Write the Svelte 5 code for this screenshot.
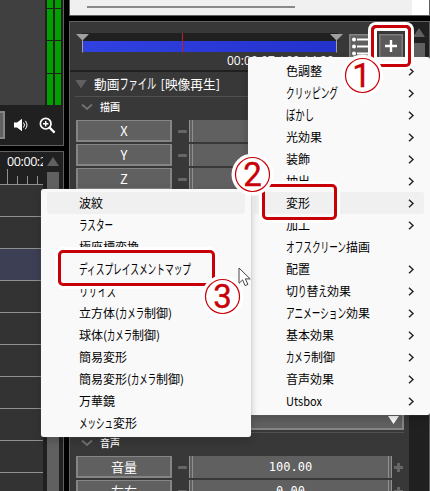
<script lang="ts">
  type Item = { name: string; width: number; leaf?: boolean };
  type Run = { text: string; x: number; width: number; size: number };

  const effects: Item[] = [
    { name: '色調整', width: 36 },
    { name: 'クリッピング', width: 52 },
    { name: 'ぼかし', width: 28 },
    { name: '光効果', width: 36 },
    { name: '装飾', width: 24 },
    { name: '抽出', width: 24 },
    { name: '変形', width: 24 },
    { name: '加工', width: 24 },
    { name: 'オフスクリーン描画', width: 84, leaf: true },
    { name: '配置', width: 24 },
    { name: '切り替え効果', width: 65 },
    { name: 'アニメーション効果', width: 84 },
    { name: '基本効果', width: 48 },
    { name: 'カメラ制御', width: 49 },
    { name: '音声効果', width: 48 },
    { name: 'Utsbox', width: 36 },
  ];

  const transforms: Item[] = [
    { name: '波紋', width: 24 },
    { name: 'ラスター', width: 34 },
    { name: '極座標変換', width: 60 },
    { name: 'ディスプレイスメントマップ', width: 112 },
    { name: 'リサイズ', width: 37 },
    { name: '立方体(カメラ制御)', width: 93 },
    { name: '球体(カメラ制御)', width: 81 },
    { name: '簡易変形', width: 48 },
    { name: '簡易変形(カメラ制御)', width: 105 },
    { name: '万華鏡', width: 36 },
    { name: 'メッシュ変形', width: 58 },
  ];

  const axes = ['X', 'Y', 'Z'];
  const sound = [
    { name: '音量', value: '100.00' },
    { name: '左右', value: '0.00' },
  ];

  // kanji keep their full width, kana share what is left of the line
  function runs(text: string, width: number, size: number): Run[] {
    const parts = text.match(/[\u3040-\u30ff]+|[\u4e00-\u9fff]+|[\x21-\x7e]+| +/g) ?? [];
    const isKanji = (s: string) => /[\u4e00-\u9fff]/.test(s);
    const isKana = (s: string) => /[\u3040-\u30ff]/.test(s);
    const kana = parts.filter(isKana).join('').length;
    const kanji = parts.filter(isKanji).join('').length;
    const other = parts.filter((s) => !isKana(s) && !isKanji(s)).join('').length;
    const otherWidth = kana || kanji ? size * 0.34 : width / other;
    const kanaWidth = kana ? (width - kanji * size - other * otherWidth) / kana : 0;
    let x = 0;
    return parts.map((part) => {
      const w = part.length * (isKanji(part) ? size : isKana(part) ? kanaWidth : otherWidth);
      const run = { text: part, x, width: w, size: isKana(part) ? size * 1.14 : size };
      x += w;
      return run;
    }).filter((run) => run.text.trim());
  }
</script>

{#snippet label(text: string, width: number, size: number)}
  <svg class="label" width={width + 2} height="20">
    {#each runs(text, width, size) as run}
      <text x={run.x} y="14.6" font-size={run.size} textLength={run.width} lengthAdjust="spacingAndGlyphs">{run.text}</text>
    {/each}
  </svg>
{/snippet}

{#snippet fold()}
  <svg class="fold" width="12" height="8"><path d="M1 1.5 L6 6 L11 1.5" /></svg>
{/snippet}

<div class="app">
  <div class="left">
    <section class="monitor">
      <div class="view">
        <div class="preview"></div>
        <div class="meter"><i></i><i></i><i></i><i></i></div>
        <div class="meter"><i></i><i></i><i></i><i></i></div>
      </div>
      <div class="tools">
        <span class="tool-button"></span>
        <svg width="15" height="14" viewBox="0 0 15 14">
          <path d="M0 4.5h3L8 .8v12.4L3 9.5H0z" fill="#fff" />
          <path d="M9.5 4.5q2 2.5 0 5M11.3 2.8q3.4 4.2 0 8.4" fill="none" stroke="#fff" />
        </svg>
        <svg width="17" height="17" viewBox="0 0 17 17" fill="none" stroke="#fff">
          <circle cx="6.7" cy="6.7" r="5.3" stroke-width="1.7" />
          <path d="M10.6 10.6 15.6 15.6" stroke-width="2.2" />
          <path d="M4 6.7h5.4M6.7 4v5.4" stroke-width="1.5" />
        </svg>
      </div>
    </section>

    <section class="timeline">
      <div class="layers">
        <div class="ruler">
          <span>00:00:20.00</span>
          <div class="ticks"><i class="major"></i><i></i><i></i><i></i></div>
        </div>
        {#each Array(10) as _, i}
          <div class="layer" class:selected={i === 2}></div>
        {/each}
      </div>
      <div class="scroll">
        <i class="up"></i>
        <i class="thumb"></i>
      </div>
    </section>
  </div>

  <div class="right">
    <section class="window"><div class="page"><i></i></div></section>

    <section class="settings">
      <div class="content">
        <div class="head">
          <div class="range">
            <svg width="264" height="20">
              <defs>
                <linearGradient id="clip"><stop stop-color="#3041e0" /><stop offset="1" stop-color="#2432cc" /></linearGradient>
              </defs>
              <rect x="6" width="256" height="8" fill="#202020" />
              <rect x="7" y="8" width="254" height="11" fill="url(#clip)" />
              <path d="M106.5 0v19.5" stroke="#bd2025" />
              <path d="M6.5 6v13.5M260.5 6v13.5" stroke="#a0a0a0" />
              <path d="M0 1h13L6.5 7.5zM254 1h13L260.5 7.5z" fill="#a0a0a0" />
            </svg>
            <span>00:00:07 / 00:14:20</span>
          </div>
          <svg class="list" width="22" height="24">
            <rect x=".75" y=".75" width="21" height="22.5" fill="#606060" stroke="#858585" stroke-width="1.5" />
            <path d="M8 5.5h13M8 12.5h13M8 19.5h13" stroke="#fff" stroke-width="2" />
            <path d="M5 5.5h0M5 12.5h0M5 19.5h0" stroke="#fff" stroke-width="4" stroke-linecap="round" />
          </svg>
          <svg class="add" width="24" height="24">
            <rect x=".75" y=".75" width="22.5" height="22.5" fill="#5a5a5a" stroke="#7c7c7c" stroke-width="1.5" />
            <path d="M12 6v12M6 12h12" stroke="#fff" stroke-width="2.4" />
          </svg>
        </div>

        <div class="title">
          <i></i>
          {@render label('動画ファイル [映像再生]', 126, 12.7)}
        </div>
        <div class="group">{@render fold()}<b>描画</b></div>
        <div class="params">
          {#each axes as axis}
            <div class="param">
              <span class="name">{axis}</span>
              <i class="minus"></i>
              <span class="value"></span>
              <i class="plus"></i>
            </div>
          {/each}
        </div>

        <div class="blend"><i></i></div>
        <div class="group sound">{@render fold()}<b>音声</b></div>
        <div class="params">
          {#each sound as p}
            <div class="param">
              <span class="name">{p.name}</span>
              <i class="minus"></i>
              <span class="value">{p.value}</span>
              <i class="plus"></i>
            </div>
          {/each}
        </div>
      </div>
      <div class="side">
        <i class="up"></i>
        <i class="thumb"></i>
      </div>
    </section>
  </div>

  <div class="menu effects">
    {#each effects as item}
      <div class="item" class:active={item.name === '変形'}>
        {@render label(item.name, item.width, 12)}
        {#if !item.leaf}
          <svg class="more" width="7" height="9"><path d="M1 .7 5 4.5 1 8.3" /></svg>
        {/if}
      </div>
    {/each}
  </div>

  <div class="menu transforms">
    {#each transforms as item, i}
      <div class="item" class:active={i === 0}>{@render label(item.name, item.width, 12)}</div>
    {/each}
  </div>

  <svg class="cursor" width="14" height="21" viewBox="0 0 14 21">
    <path d="M1 1v15.3l3.6-3.4 2.5 5.7 2.8-1.2-2.5-5.5h4.8z" />
  </svg>

  <div class="frame frame-add"></div>
  <div class="frame frame-menu"></div>
  <div class="frame frame-item"></div>
  {#each [1, 2, 3] as n}
    <svg class="step step-{n}" width="43" height="43" viewBox="0 0 43 43">
      <circle cx="21.5" cy="21.5" r="21" fill="#fff" />
      <circle cx="21.5" cy="21.5" r="17" fill="#fff" stroke="#c80008" stroke-width="1.2" />
      <text x={n === 1 ? 20.5 : 21.5} y="33" text-anchor="middle">{n}</text>
    </svg>
  {/each}
</div>

<style>
:global(body) {
  background: #000;
}
.app {
  position: relative;
  display: flex;
  gap: 5px;
  width: 430px;
  height: 491px;
  overflow: hidden;
  background: #000;
  color: #fff;
  font-family: "Noto Sans CJK JP", sans-serif;
}
.app * {
  box-sizing: border-box;
}
.app svg {
  flex: none;
}
i {
  display: block;
  flex: none;
}
.label {
  display: block;
  overflow: visible;
  fill: currentColor;
}
.left {
  display: flex;
  flex-direction: column;
  gap: 5px;
  width: 64px;
}
.monitor {
  height: 146px;
  background: #202020;
  border-right: 1px solid #606060;
  border-bottom: 1px solid #606060;
}
.view {
  display: flex;
  gap: 2px;
  height: 105px;
}
.preview {
  width: 45px;
  background: #404040;
}
.meter {
  display: grid;
  grid-template-rows: 8px 31px 32px 31px;
  gap: 1px;
  width: 6px;
}
.meter i {
  background: #00a000;
}
.tools {
  display: flex;
  align-items: center;
  height: 40px;
}
.tool-button {
  width: 5px;
  height: 28px;
  margin-right: 9px;
  background: #606060;
  border: 2px solid #858585;
  border-left: none;
}
.tools svg + svg {
  margin-left: 10px;
}
.timeline {
  display: flex;
  flex: 1;
  min-height: 0;
  gap: 4px;
  overflow: hidden;
  background: #202020;
  border-top: 1px solid #606060;
  border-right: 1px solid #606060;
}
.layers {
  width: 43px;
  overflow: hidden;
}
.ruler {
  display: flex;
  flex-direction: column;
  height: 33px;
  padding-left: 7px;
  border-bottom: 1px solid #909090;
}
.ruler span {
  height: 17px;
  font: 12.5px/19px "Open Sans", sans-serif;
  letter-spacing: -0.4px;
  white-space: nowrap;
}
.ticks {
  display: flex;
  align-items: flex-end;
  gap: 9px;
  height: 15px;
}
.ticks i {
  width: 1px;
  height: 8px;
  background: #909090;
}
.ticks .major {
  height: 15px;
}
.layer {
  height: 32px;
  background: #333;
  border-bottom: 1px solid #909090;
}
.layer.selected {
  background: #3d4054;
}
.scroll {
  width: 12px;
  padding-top: 5px;
}
.up {
  width: 12px;
  height: 9px;
  background: #606060;
  clip-path: polygon(50% 0, 100% 100%, 0 100%);
}
.thumb {
  width: 12px;
  height: 400px;
  margin-top: 6px;
  background: #606060;
}
.right {
  display: flex;
  flex-direction: column;
  gap: 5px;
  width: 361px;
}
.window {
  height: 16px;
  background: #fff;
  border: 1px solid #606060;
  border-top: none;
}
.page {
  width: 342px;
  height: 15px;
  padding: 6px 0 0 17px;
  background: #f0f0f0;
}
.page i {
  width: 208px;
  height: 2px;
  background: #898989;
}
.settings {
  display: flex;
  flex: 1;
  min-height: 0;
  overflow: hidden;
  background: #383838;
  border: 1px solid #606060;
  border-bottom: none;
}
.content {
  width: 339px;
}
.head {
  display: flex;
  height: 50px;
  padding: 12px 0 0 6px;
  border-bottom: 2px solid #202020;
}
.range {
  width: 273px;
  margin-top: -1px;
}
.range svg {
  display: block;
  overflow: visible;
}
.range span {
  display: block;
  width: 258px;
  text-align: right;
  font: 12px/15px "Open Sans", sans-serif;
  letter-spacing: 0.08px;
}
.add {
  margin-left: 8px;
}
.title {
  display: flex;
  align-items: center;
  gap: 7px;
  height: 25px;
  margin-left: 5px;
  border-bottom: 1px solid #505050;
}
.title i {
  width: 12px;
  height: 9px;
  background: #606060;
  clip-path: polygon(0 0, 100% 0, 50% 100%);
}
.group {
  display: flex;
  align-items: center;
  gap: 7px;
  height: 23px;
  padding: 0 0 3px 11px;
}
.group b {
  font-size: 10px;
  line-height: 14px;
  font-weight: 500;
}
.fold path {
  fill: none;
  stroke: #707070;
  stroke-width: 2;
}
.params {
  display: flex;
  flex-direction: column;
  gap: 2px;
  padding-left: 6px;
}
.param {
  display: flex;
  align-items: center;
  height: 22px;
}
.name {
  width: 96px;
  height: 22px;
  background: #606060;
  border: 2px solid #858585;
  border-top-width: 1px;
  text-align: center;
  font-size: 13px;
  line-height: 20px;
}
.minus {
  width: 9px;
  height: 3px;
  margin: 0 2px 0 6px;
  border-radius: 1px;
  background: #666;
}
.value {
  width: 203px;
  height: 22px;
  background: #606060;
  border: 4px double #909090;
  border-width: 0 4px;
  text-align: center;
  font: 12px/22px "DejaVu Sans Mono", monospace;
}
.plus {
  width: 9px;
  height: 9px;
  margin-left: 2px;
  background: linear-gradient(#666, #666) center / 9px 3px no-repeat,
    linear-gradient(#666, #666) center / 3px 9px no-repeat;
}
.blend {
  display: flex;
  justify-content: flex-end;
  width: 328px;
  height: 22px;
  margin: 218px 0 0 6px;
  padding: 6px 3px 0 0;
  background: #606060;
  border: 2px solid #858585;
}
.blend i {
  width: 11px;
  height: 8px;
  background: #fff;
  clip-path: polygon(0 0, 100% 0, 50% 100%);
}
.sound {
  width: 328px;
  height: 24px;
  margin: 2px 0 0 6px;
  padding: 0 0 4px 5px;
  border-top: 1px solid #505050;
}
.side {
  width: 20px;
  padding: 6px 0 0 4px;
  background: #202020;
}
.side .thumb {
  height: 48px;
}
.menu {
  position: absolute;
  padding: 3px 6px;
  background: #f9f9f9;
  border-radius: 3px;
  color: #000;
  box-shadow: 0 0 1px 0 #888, 0 3px 8px rgba(0, 0, 0, 0.22);
}
.effects {
  left: 248px;
  top: 57px;
  width: 182px;
  height: 358px;
}
.transforms {
  left: 41px;
  top: 189px;
  width: 210px;
  height: 248px;
}
.item {
  display: flex;
  align-items: center;
  justify-content: space-between;
  height: 22px;
  padding: 0 9px 0 32px;
  border-radius: 3px;
}
.active {
  background: #f0f0f0;
}
.more path {
  fill: none;
  stroke: #222;
  stroke-width: 1.4;
}
.cursor {
  position: absolute;
  left: 238px;
  top: 267px;
}
.cursor path {
  fill: #fff;
  stroke: #444;
}
.frame {
  position: absolute;
  border: 3px solid #c80008;
  border-radius: 5px;
  box-shadow: 0 0 0 3px #fff;
}
.frame-add {
  left: 371px;
  top: 25px;
  width: 40px;
  height: 42px;
  box-shadow: 0 0 0 3px #fff, inset 0 0 0 3px #fff;
}
.frame-menu {
  left: 262px;
  top: 184px;
  width: 75px;
  height: 36px;
}
.frame-item {
  left: 58px;
  top: 250px;
  width: 157px;
  height: 36px;
}
.step {
  position: absolute;
}
.step text {
  fill: #c80008;
  stroke: #c80008;
  stroke-width: 0.4;
  font: 33px Roboto, sans-serif;
}
.step-1 {
  left: 341px;
  top: 54px;
}
.step-2 {
  left: 231px;
  top: 153px;
}
.step-3 {
  left: 201px;
  top: 275px;
}
</style>
